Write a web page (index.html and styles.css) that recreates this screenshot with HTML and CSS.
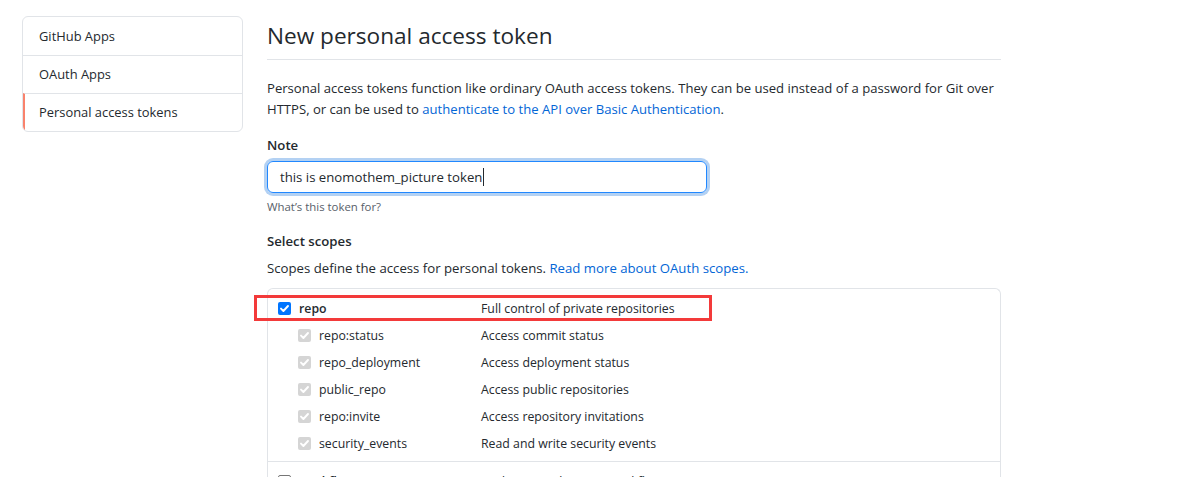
FILE: index.html
```html
<!DOCTYPE html>
<html>
<head>
<meta charset="utf-8">
<link rel="stylesheet" href="styles.css">
</head>
<body>
<div class="page">
  <nav class="menu">
    <a class="menu-item">GitHub Apps</a>
    <a class="menu-item">OAuth Apps</a>
    <a class="menu-item selected">Personal access tokens</a>
  </nav>
  <main class="main">
    <h2 class="title">New personal access token</h2>
    <p class="lead">Personal access tokens function like ordinary OAuth access tokens. They can be used instead of a password for Git over HTTPS, or can be used to <a class="link">authenticate to the API over Basic Authentication</a>.</p>
    <label class="label">Note</label>
    <div class="input"><span>this is enomothem_picture token</span><span class="caret"></span></div>
    <p class="note">What’s this token for?</p>
    <label class="label scopes-label">Select scopes</label>
    <p class="scopes-desc">Scopes define the access for personal tokens. <a class="link">Read more about OAuth scopes.</a></p>
    <div class="scopes">
      <div class="group">
        <div class="row top">
          <span class="cb checked"><svg viewBox="0 0 13 13" width="13" height="13"><path d="M3 6.6 L5.4 9 L10 4" fill="none" stroke="#fff" stroke-width="1.9" stroke-linecap="round" stroke-linejoin="round"/></svg></span>
          <span class="name strong">repo</span>
          <span class="desc">Full control of private repositories</span>
          <div class="highlight"></div>
        </div>
        <div class="row sub"><span class="cb dis"><svg viewBox="0 0 13 13" width="13" height="13"><path d="M3 6.6 L5.4 9 L10 4" fill="none" stroke="#fff" stroke-width="1.9" stroke-linecap="round" stroke-linejoin="round"/></svg></span><span class="name">repo:status</span><span class="desc">Access commit status</span></div>
        <div class="row sub"><span class="cb dis"><svg viewBox="0 0 13 13" width="13" height="13"><path d="M3 6.6 L5.4 9 L10 4" fill="none" stroke="#fff" stroke-width="1.9" stroke-linecap="round" stroke-linejoin="round"/></svg></span><span class="name">repo_deployment</span><span class="desc">Access deployment status</span></div>
        <div class="row sub"><span class="cb dis"><svg viewBox="0 0 13 13" width="13" height="13"><path d="M3 6.6 L5.4 9 L10 4" fill="none" stroke="#fff" stroke-width="1.9" stroke-linecap="round" stroke-linejoin="round"/></svg></span><span class="name">public_repo</span><span class="desc">Access public repositories</span></div>
        <div class="row sub"><span class="cb dis"><svg viewBox="0 0 13 13" width="13" height="13"><path d="M3 6.6 L5.4 9 L10 4" fill="none" stroke="#fff" stroke-width="1.9" stroke-linecap="round" stroke-linejoin="round"/></svg></span><span class="name">repo:invite</span><span class="desc">Access repository invitations</span></div>
        <div class="row sub"><span class="cb dis"><svg viewBox="0 0 13 13" width="13" height="13"><path d="M3 6.6 L5.4 9 L10 4" fill="none" stroke="#fff" stroke-width="1.9" stroke-linecap="round" stroke-linejoin="round"/></svg></span><span class="name">security_events</span><span class="desc">Read and write security events</span></div>
      </div>
      <div class="group">
        <div class="row top"><span class="cb empty"></span><span class="name strong">workflow</span><span class="desc">Update GitHub Action workflows</span></div>
      </div>
    </div>
  </main>
</div>
</body>
</html>
```
FILE: styles.css
```css
* { box-sizing: border-box; }
html, body { margin: 0; padding: 0; background: #fff; }
body {
  font-family: "Open Sans", "Noto Sans", sans-serif;
  font-size: 13px;
  color: #24292e;
  overflow: hidden;
  height: 477px;
}
.page {
  display: flex;
  align-items: flex-start;
  padding: 16px 0 0 22px;
}
.menu {
  width: 221px;
  border: 1px solid #e1e4e8;
  border-radius: 6px;
  display: flex;
  flex-direction: column;
  overflow: hidden;
  flex-shrink: 0;
}
.menu-item {
  display: block;
  height: 38px;
  line-height: 37px;
  padding-left: 16px;
  border-top: 1px solid #e1e4e8;
  font-size: 12.9px;
  color: #24292e;
}
.menu-item:first-child { border-top: 0; line-height: 39px; }
.menu-item.selected {
  border-left: 2px solid #f9826c;
  padding-left: 14px;
}
.main {
  margin-left: 24px;
  width: 734px;
  flex-shrink: 0;
}
.title {
  margin: 0;
  font-weight: 400;
  font-size: 22.6px;
  line-height: 36px;
  margin-top: 2px;
  padding-bottom: 5px;
  border-bottom: 1px solid #e1e4e8;
}
.lead {
  margin: 18px 0 0;
  line-height: 21px;
  font-size: 13.1px;
}
.link { color: #0366d6; text-decoration: none; }
.label {
  display: block;
  font-weight: 600;
  font-size: 13.2px;
  line-height: 20px;
  margin-top: 15px;
}
.input {
  margin-top: 6px;
  width: 440px;
  height: 32px;
  border: 1px solid #2188ff;
  border-radius: 6px;
  box-shadow: 0 0 0 3px rgba(3, 102, 214, 0.3);
  padding: 0 12px;
  display: flex;
  align-items: center;
  font-size: 13.2px;
}
.caret {
  display: inline-block;
  width: 1px;
  height: 18px;
  background: #24292e;
  margin-left: 1px;
}
.note {
  margin: 6px 0 0;
  font-size: 11.4px;
  color: #586069;
  line-height: 16px;
}
.scopes-label { margin-top: 16px; }
.scopes-desc {
  margin: 7px 0 0;
  font-size: 13.2px;
  line-height: 20px;
}
.scopes {
  margin-top: 10px;
  border: 1px solid #e1e4e8;
  border-radius: 6px;
  border-bottom: 0;
}
.group {
  padding: 6px 0 4px;
  border-top: 1px solid #e1e4e8;
}
.group:first-child { border-top: 0; }
.group + .group { padding-top: 6px; }
.row {
  position: relative;
  display: flex;
  align-items: center;
  height: 27px;
  font-size: 12.3px;
}
.cb {
  width: 13px;
  height: 13px;
  border-radius: 2px;
  display: inline-flex;
  flex-shrink: 0;
}
.row.top .cb { margin-left: 10px; }
.row.sub .cb { margin-left: 30px; }
.cb.checked { background: #0075ff; }
.cb.dis { background: #d5d5d5; }
.cb.empty { border: 1px solid #767676; background: #fff; }
.name { margin-left: 8px; }
.row.top .name { width: 182px; }
.row.sub .name { width: 162px; }
.strong { font-weight: 600; }
.desc { color: #24292e; }
.highlight {
  position: absolute;
  left: -14px;
  top: 0;
  width: 458px;
  height: 26px;
  border: 3px solid #f33a3a;
  pointer-events: none;
}
```
